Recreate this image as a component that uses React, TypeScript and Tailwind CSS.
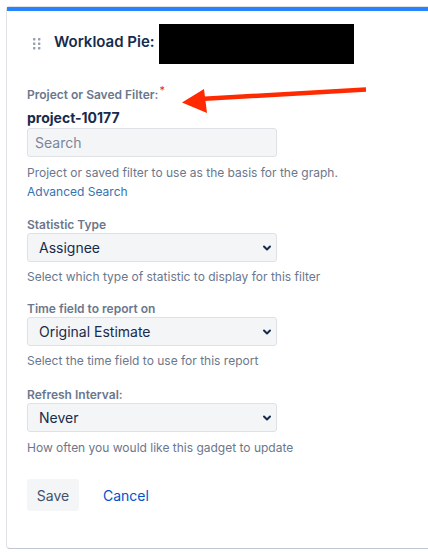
import React from "react";

const Chevron = () => (
  <svg
    className="absolute right-[5px] top-1/2 -translate-y-1/2 pointer-events-none"
    width="10"
    height="10"
    viewBox="0 0 10 10"
  >
    <path d="M2 3.5 L5 6.5 L8 3.5" fill="none" stroke="#172B4D" strokeWidth="2" strokeLinecap="round" strokeLinejoin="round" />
  </svg>
);

const SelectBox = ({ value }: { value: string }) => (
  <div className="relative w-[250px] h-[29px]">
    <select
      defaultValue={value}
      className="appearance-none w-full h-full bg-[#F4F5F7] border border-[#DFE1E6] rounded-[3px] pl-[11px] text-[14px] text-[#172B4D] outline-none"
    >
      <option>{value}</option>
    </select>
    <Chevron />
  </div>
);

export default function App() {
  return (
    <div
      className="relative w-[428px] h-[552px] overflow-hidden bg-white"
      style={{ fontFamily: "Inter, 'Noto Sans', sans-serif" }}
    >
      <div className="ml-[6px] mt-[6px] w-[440px] h-[543px] border-l border-b border-t border-[#DFE1E6] border-b-[#C1C7D0] rounded-[4px] flex flex-col">
        <div className="h-[4px] bg-[#2684FF] shrink-0" />
        <div className="flex items-center h-[40px] mt-[13px] pl-[26px]">
          <svg width="8" height="12" viewBox="0 0 8 12" className="mr-[13px]">
            {[0, 1, 2].map((r) =>
              [0, 1].map((c) => (
                <rect key={`${r}-${c}`} x={c * 5} y={r * 4.5} width="2.4" height="2.4" rx="0.6" fill="#97A0AF" />
              ))
            )}
          </svg>
          <span className="text-[15px] font-semibold text-[#172B4D] -mt-[3px]">Workload Pie:</span>
          <div className="ml-[4px] w-[195px] h-[40px] bg-black" />
        </div>

        <div className="pl-[20px] flex flex-col">
          <div className="mt-[23px] h-[16px] text-[12px] leading-[16px] font-semibold text-[#6B778C]">
            Project or Saved Filter:<span className="text-[#DE350B] font-normal relative -top-[5px] ml-[1px] text-[11px]">*</span>
          </div>
          <div className="mt-[5px] h-[20px] text-[14px] leading-[20px] font-bold text-[#172B4D]">project-10177</div>
          <div className="w-[250px] h-[29px] bg-[#F4F5F7] border border-[#DFE1E6] rounded-[3px] flex items-center pl-[7px] text-[14px] text-[#7A869A]">
            Search
          </div>
          <div className="mt-[8px] h-[16px] text-[12px] leading-[16px] text-[#6B778C]">
            Project or saved filter to use as the basis for the graph.
          </div>
          <div className="mt-[3px] h-[16px] text-[12px] leading-[16px] text-[#3572B0]">Advanced Search</div>

          <div className="mt-[17px] h-[16px] text-[12px] leading-[16px] font-semibold text-[#6B778C]">Statistic Type</div>
          <SelectBox value="Assignee" />
          <div className="mt-[7px] h-[16px] text-[12px] leading-[16px] text-[#6B778C]">
            Select which type of statistic to display for this filter
          </div>

          <div className="mt-[16px] h-[16px] text-[12px] leading-[16px] font-semibold text-[#6B778C]">Time field to report on</div>
          <SelectBox value="Original Estimate" />
          <div className="mt-[7px] h-[16px] text-[12px] leading-[16px] text-[#6B778C]">
            Select the time field to use for this report
          </div>

          <div className="mt-[18px] h-[16px] text-[12px] leading-[16px] font-semibold text-[#6B778C]">Refresh Interval:</div>
          <SelectBox value="Never" />
          <div className="mt-[8px] h-[16px] text-[12px] leading-[16px] text-[#6B778C]">
            How often you would like this gadget to update
          </div>

          <div className="mt-[23px] flex items-center">
            <button className="w-[52px] h-[32px] bg-[#F4F5F7] rounded-[3px] text-[14px] text-[#42526E]">Save</button>
            <span className="ml-[24px] text-[14px] text-[#0052CC]">Cancel</span>
          </div>
        </div>
      </div>

      <svg className="absolute left-0 top-0 pointer-events-none" width="428" height="552">
        <line x1="366" y1="89.5" x2="200" y2="99" stroke="#FF2A00" strokeWidth="4.5" />
        <polygon points="182,102.5 204,89 207,113" fill="#FF2A00" />
      </svg>
    </div>
  );
}
